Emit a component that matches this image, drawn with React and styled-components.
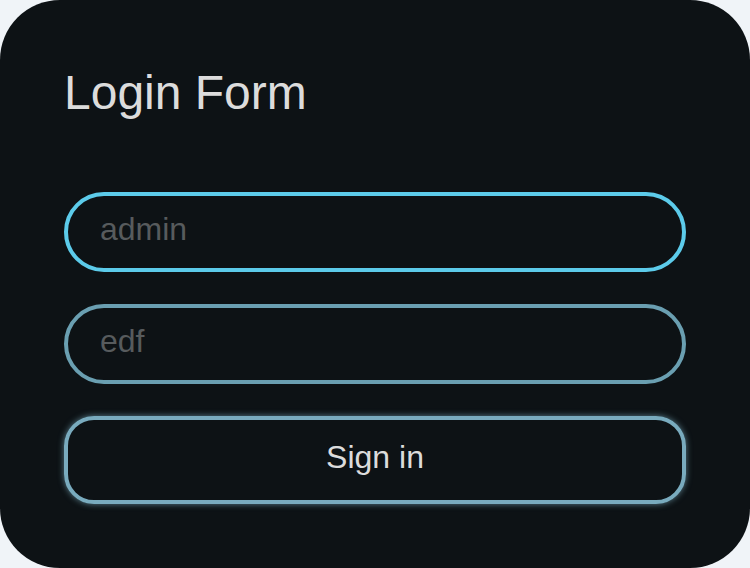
import React from 'react';
import styled, { createGlobalStyle } from 'styled-components';

const GlobalStyle = createGlobalStyle`
  html, body {
    margin: 0;
    padding: 0;
    background: #f0f4f8;
  }
  * {
    box-sizing: border-box;
  }
`;

const Card = styled.form`
  width: 750px;
  height: 568px;
  padding: 65px 64px 64px;
  background: #0d1215;
  border-radius: 60px;
  display: flex;
  flex-direction: column;
  font-family: "Liberation Sans", Arial, sans-serif;
`;

const Title = styled.h1`
  margin: 0 0 71px;
  font-size: 48px;
  line-height: 56px;
  font-weight: 400;
  color: #dcdcdc;
`;

const Fields = styled.div`
  display: flex;
  flex-direction: column;
  gap: 32px;
`;

const Input = styled.input`
  width: 100%;
  height: 80px;
  padding: 0 32px 5px;
  background: transparent;
  border: 4px solid ${(props) => (props.$active ? '#5ccbea' : '#6a9fb1')};
  border-radius: 40px;
  outline: none;
  font-family: inherit;
  font-size: 32px;
  color: #dcdcdc;

  &::placeholder {
    color: #575b5d;
  }
`;

const SubmitButton = styled.button`
  width: 100%;
  height: 88px;
  padding: 0 0 5px;
  background: transparent;
  border: 4px solid #79abbe;
  border-radius: 30px;
  box-shadow: 0 0 6px rgba(121, 171, 190, 0.7);
  font-family: inherit;
  font-size: 32px;
  color: #dcdcdc;
  cursor: pointer;
`;

const App = () => {
  return (
    <>
      <GlobalStyle />
      <Card onSubmit={(e) => e.preventDefault()}>
        <Title>Login Form</Title>
        <Fields>
          <Input $active placeholder="admin" />
          <Input type="password" placeholder="edf" />
          <SubmitButton type="submit">Sign in</SubmitButton>
        </Fields>
      </Card>
    </>
  );
};

export default App;
